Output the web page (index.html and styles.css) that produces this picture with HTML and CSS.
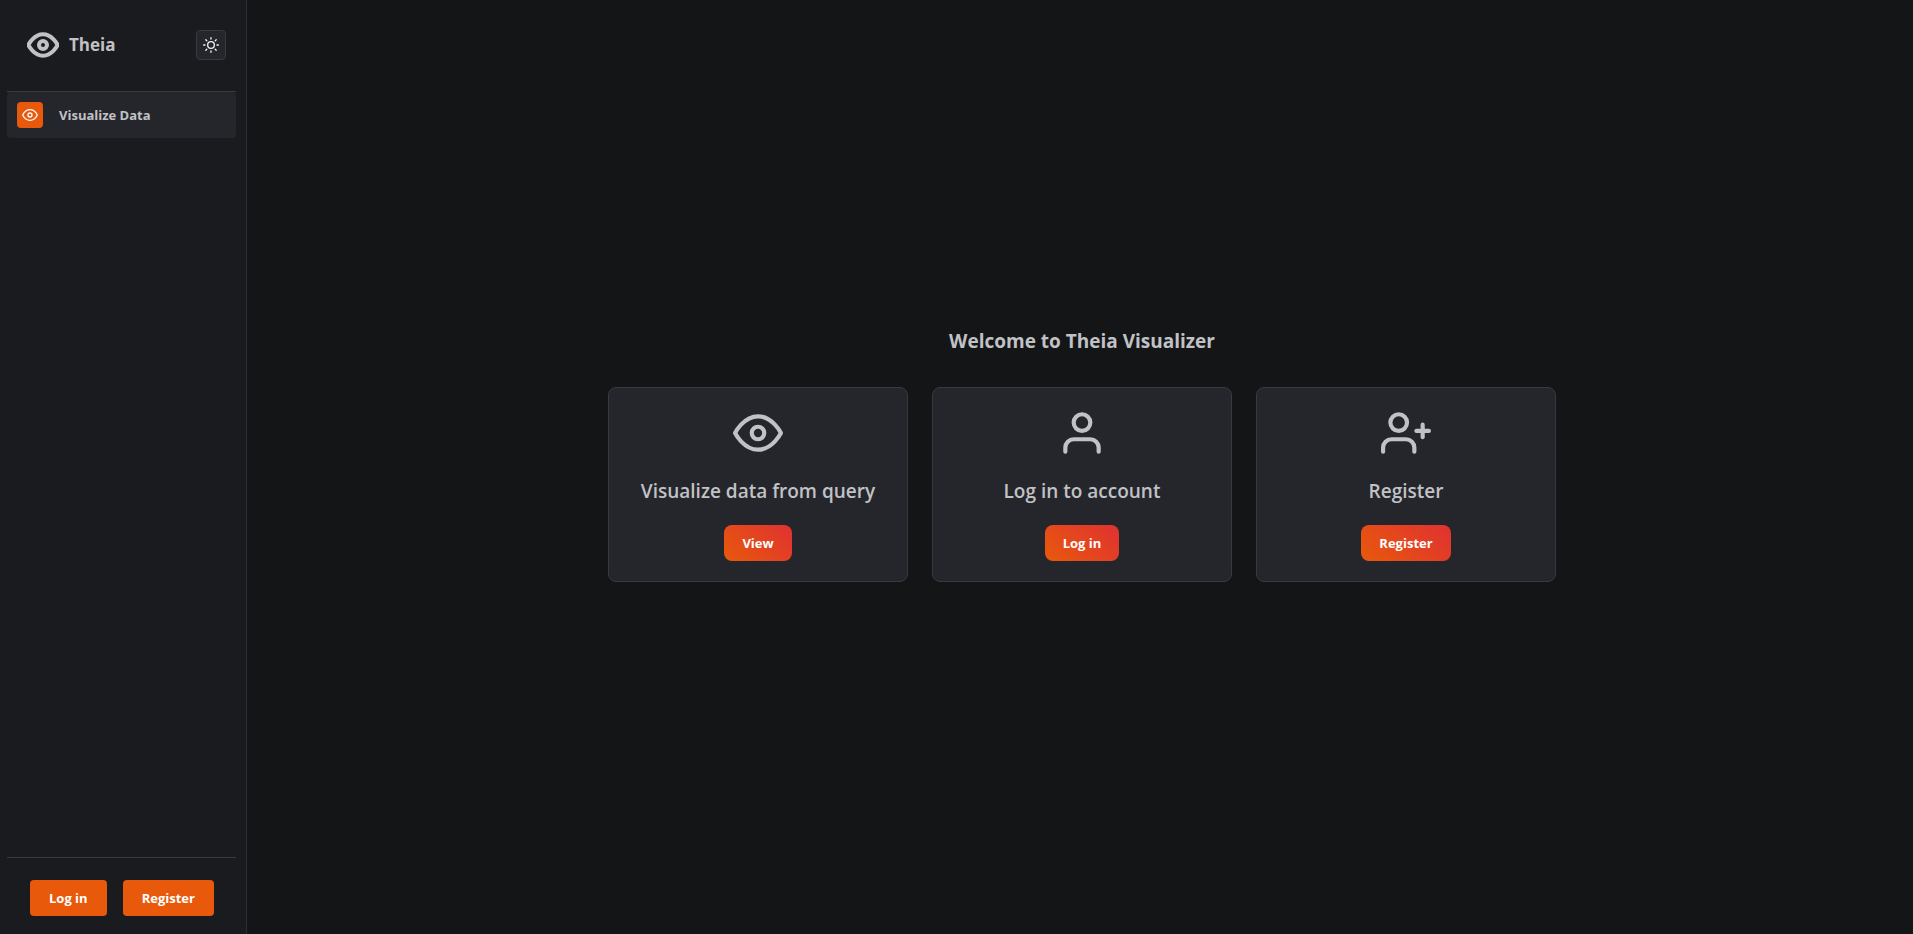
FILE: index.html
```html
<!DOCTYPE html>
<html lang="en">
<head>
<meta charset="utf-8">
<meta name="viewport" content="width=device-width, initial-scale=1">
<title>Theia Visualizer</title>
<link rel="stylesheet" href="styles.css">
</head>
<body>
<div class="app">
  <aside class="sidebar">
    <header class="brand">
      <svg class="icon icon-logo" viewBox="0 0 24 24" aria-hidden="true"><path d="M1 12s4-8 11-8 11 8 11 8-4 8-11 8-11-8-11-8z"/><circle cx="12" cy="12" r="3"/></svg>
      <span class="brand-name">Theia</span>
      <button class="theme-toggle" type="button" aria-label="Toggle color scheme">
        <svg class="icon icon-small" viewBox="0 0 24 24" aria-hidden="true"><circle cx="12" cy="12" r="5"/><path d="M12 1v2M12 21v2M4.22 4.22l1.42 1.42M18.36 18.36l1.42 1.42M1 12h2M21 12h2M4.22 19.78l1.42-1.42M18.36 5.64l1.42-1.42"/></svg>
      </button>
    </header>
    <nav class="nav">
      <a class="nav-link" href="#visualize">
        <span class="nav-icon"><svg class="icon icon-small" viewBox="0 0 24 24" aria-hidden="true"><path d="M1 12s4-8 11-8 11 8 11 8-4 8-11 8-11-8-11-8z"/><circle cx="12" cy="12" r="3"/></svg></span>
        <span>Visualize Data</span>
      </a>
    </nav>
    <footer class="account">
      <button class="button" type="button">Log in</button>
      <button class="button" type="button">Register</button>
    </footer>
  </aside>
  <main class="main">
    <h1 class="title">Welcome to Theia Visualizer</h1>
    <div class="cards">
      <section class="card">
        <svg class="icon icon-large" viewBox="0 0 24 24" aria-hidden="true"><path d="M1 12s4-8 11-8 11 8 11 8-4 8-11 8-11-8-11-8z"/><circle cx="12" cy="12" r="3"/></svg>
        <h2 class="card-title">Visualize data from query</h2>
        <button class="button button-gradient" type="button">View</button>
      </section>
      <section class="card">
        <svg class="icon icon-large" viewBox="0 0 24 24" aria-hidden="true"><path d="M20 21v-2a4 4 0 0 0-4-4H8a4 4 0 0 0-4 4v2"/><circle cx="12" cy="7" r="4"/></svg>
        <h2 class="card-title">Log in to account</h2>
        <button class="button button-gradient" type="button">Log in</button>
      </section>
      <section class="card">
        <svg class="icon icon-large" viewBox="0 0 24 24" aria-hidden="true"><path d="M16 21v-2a4 4 0 0 0-4-4H5a4 4 0 0 0-4 4v2"/><circle cx="8.5" cy="7" r="4"/><path d="M20 8v6M23 11h-6"/></svg>
        <h2 class="card-title">Register</h2>
        <button class="button button-gradient" type="button">Register</button>
      </section>
    </div>
  </main>
</div>
</body>
</html>
```
FILE: styles.css
```css
*, *::before, *::after { box-sizing: border-box; }

body {
  margin: 0;
  background: #141517;
  color: #c1c2c5;
  font-family: "Segoe UI", "Open Sans", "Noto Sans", sans-serif;
  font-size: 13px;
}

.app { display: flex; min-height: 100vh; }

.icon {
  display: block;
  fill: none;
  stroke: currentColor;
  stroke-width: 2;
  stroke-linecap: round;
  stroke-linejoin: round;
}
.icon-small { width: 16px; height: 16px; }
.icon-logo { width: 32px; height: 32px; stroke-width: 3; }
.icon-large { width: 50px; height: 50px; }

.sidebar {
  display: flex;
  flex-direction: column;
  flex: none;
  width: 247px;
  padding: 0 10px 0 7px;
  background: #1a1b1e;
  border-right: 1px solid #2c2e33;
}

.brand {
  display: flex;
  align-items: center;
  gap: 10px;
  padding: 29px 10px 30px 20px;
  border-bottom: 1px solid #373a40;
}
.brand-name { font-size: 17px; font-weight: 700; line-height: 28px; }

.theme-toggle {
  display: flex;
  align-items: center;
  justify-content: center;
  width: 30px;
  height: 30px;
  margin-left: auto;
  padding: 0;
  border: 1px solid #373a40;
  border-radius: 4px;
  background: #25262b;
  color: #f1f3f5;
}

.nav { flex: 1; }
.nav-link {
  display: flex;
  align-items: center;
  gap: 16px;
  padding: 10px;
  border-radius: 4px;
  background: #25262b;
  color: inherit;
  font-weight: 700;
  text-decoration: none;
}
.nav-icon {
  display: flex;
  align-items: center;
  justify-content: center;
  width: 26px;
  height: 26px;
  border-radius: 4px;
  background: #e8590c;
  color: #fff;
}

.account {
  display: flex;
  gap: 16px;
  padding: 22px 20px 18px 23px;
  border-top: 1px solid #373a40;
}

.button {
  height: 36px;
  padding: 0 19px;
  border: 0;
  border-radius: 4px;
  background: #e8590c;
  color: #fff;
  font: inherit;
  font-weight: 700;
  white-space: nowrap;
}
.button-gradient {
  padding: 0 18px;
  border-radius: 8px;
  background: linear-gradient(45deg, #e8590c, #e03131);
}

.main {
  display: flex;
  flex-direction: column;
  align-items: center;
  justify-content: center;
  flex: 1;
  gap: 30px;
  padding: 0 16px 27px 20px;
}

.title {
  margin: 0;
  font-size: 19px;
  font-weight: 700;
  line-height: 31px;
}

.cards { display: flex; flex-wrap: wrap; justify-content: center; gap: 24px; }
.card {
  display: flex;
  flex-direction: column;
  align-items: center;
  gap: 18px;
  width: 300px;
  padding: 20px;
  border: 1px solid #373a40;
  border-radius: 8px;
  background: #25262b;
}
.card-title {
  margin: 0;
  font-size: 19px;
  font-weight: 600;
  line-height: 31px;
}
```
